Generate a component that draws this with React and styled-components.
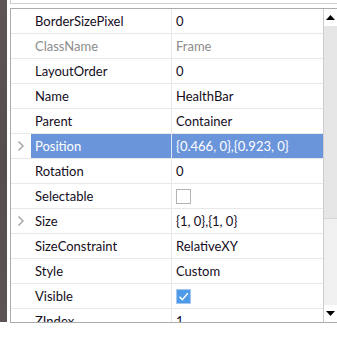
import React from 'react'
import styled, { createGlobalStyle } from 'styled-components'

const GlobalStyle = createGlobalStyle`
  html, body {
    margin: 0;
    background: #fff;
  }
  body {
    font-family: Lato, "Open Sans", sans-serif;
  }
`

const rows = [
  { name: 'BorderSizePixel', value: '0' },
  { name: 'ClassName', value: 'Frame', muted: true },
  { name: 'LayoutOrder', value: '0' },
  { name: 'Name', value: 'HealthBar' },
  { name: 'Parent', value: 'Container' },
  { name: 'Position', value: '{0.466, 0},{0.923, 0}', expand: true, selected: true },
  { name: 'Rotation', value: '0' },
  { name: 'Selectable', check: 'off' },
  { name: 'Size', value: '{1, 0},{1, 0}', expand: true },
  { name: 'SizeConstraint', value: 'RelativeXY' },
  { name: 'Style', value: 'Custom' },
  { name: 'Visible', check: 'on' },
  { name: 'ZIndex', value: '1' },
]

const App = () => {
  return (
    <Screen>
      <GlobalStyle />
      <Backdrop />
      <Main>
        <TopStub />
        <Panel>
          <Grid>
            {rows.map((r) => (
              <Row key={r.name}>
                <Expander>{r.expand && <Chevron viewBox="0 0 8 12"><path d="M1.5 1.5 L6 6 L1.5 10.5" /></Chevron>}</Expander>
                <NameCell $selected={r.selected} $muted={r.muted}>{r.name}</NameCell>
                <ValueCell $selected={r.selected} $muted={r.muted}>
                  {r.check ? (
                    <Check $on={r.check === 'on'}>
                      {r.check === 'on' && (
                        <svg width="13" height="13" viewBox="0 0 13 13">
                          <path d="M2.5 6.8 L5.3 9.6 L10.8 3.2" fill="none" stroke="#fff" strokeWidth="1.4" />
                        </svg>
                      )}
                    </Check>
                  ) : r.value}
                </ValueCell>
              </Row>
            ))}
          </Grid>
          <Scrollbar>
            <ArrowBtn>
              <svg width="9" height="5" viewBox="0 0 9 5"><path d="M0 5 L4.5 0 L9 5 Z" fill="#000" /></svg>
            </ArrowBtn>
            <Thumb />
            <Track />
            <ArrowBtn>
              <svg width="9" height="5" viewBox="0 0 9 5"><path d="M0 0 L4.5 5 L9 0 Z" fill="#000" /></svg>
            </ArrowBtn>
          </Scrollbar>
        </Panel>
      </Main>
    </Screen>
  )
}

export default App

const Screen = styled.div`
  display: flex;
  width: 337px;
  height: 337px;
  overflow: hidden;
  background: #fff;
`

const Backdrop = styled.div`
  width: 7px;
  height: 322px;
  flex-shrink: 0;
  background: linear-gradient(180deg, #5e5656, #554d4e 50%, #5c5455);
`

const Main = styled.div`
  flex: 1;
  display: flex;
  flex-direction: column;
  padding-left: 3px;
`

const TopStub = styled.div`
  height: 3px;
  border-left: 1px solid #c8c8c8;
  border-bottom: 1px solid #cfcfcf;
  margin-bottom: 4px;
`

const Panel = styled.div`
  display: flex;
  height: 313px;
  border: 1px solid #ababab;
  border-right: none;
`

const Grid = styled.div`
  flex: 1;
  overflow: hidden;
`

const Row = styled.div`
  display: grid;
  grid-template-columns: 20px 141px 1fr;
  height: 24px;
  border-bottom: 1px solid #e8e8e8;
  font-size: 13px;
`

const Expander = styled.div`
  display: flex;
  align-items: center;
  justify-content: center;
`

const Chevron = styled.svg`
  width: 8px;
  height: 12px;
  fill: none;
  stroke: #a8a8a8;
  stroke-width: 1.5;
`

const NameCell = styled.div`
  display: flex;
  align-items: center;
  padding-left: 4px;
  border-right: 1px solid ${(p) => (p.$selected ? '#dce6f6' : '#e8e8e8')};
  background: ${(p) => (p.$selected ? '#6b95db' : 'transparent')};
  color: ${(p) => (p.$selected ? '#fff' : p.$muted ? '#8c8c8c' : '#140d22')};
  white-space: nowrap;
`

const ValueCell = styled(NameCell)`
  border-right: none;
`

const Check = styled.div`
  width: 15px;
  height: 15px;
  box-sizing: border-box;
  border: 1px solid ${(p) => (p.$on ? '#a6c8ee' : '#b4b4b4')};
  background: ${(p) => (p.$on ? '#4d9be8' : '#fff')};
  display: flex;
  align-items: center;
  justify-content: center;
`

const Scrollbar = styled.div`
  width: 13px;
  border-left: 1px solid #cdcdcd;
  display: flex;
  flex-direction: column;
  background: #f0f0f0;
`

const ArrowBtn = styled.div`
  height: 17px;
  display: flex;
  align-items: center;
  justify-content: center;
  background: #fff;
`

const Thumb = styled.div`
  height: 192px;
  background: #e6e6e6;
  border-bottom: 1px solid #d6d6d6;
`

const Track = styled.div`
  flex: 1;
  background: #f0f0f0;
`
